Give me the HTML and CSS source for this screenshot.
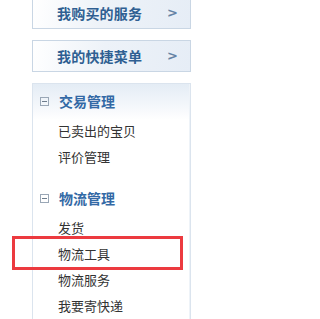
FILE: index.html
```html
<!DOCTYPE html>
<html lang="zh">
<head>
<meta charset="utf-8">
<link rel="stylesheet" href="styles.css">
</head>
<body>
<div class="sidebar">
  <a class="navbtn first"><span class="label">我购买的服务</span><span class="arrow">&gt;</span></a>
  <a class="navbtn"><span class="label">我的快捷菜单</span><span class="arrow">&gt;</span></a>
  <div class="panel">
    <div class="group">
      <div class="group-head"><span class="toggle"></span><span class="group-title">交易管理</span></div>
      <ul class="items">
        <li class="item">已卖出的宝贝</li>
        <li class="item">评价管理</li>
      </ul>
    </div>
    <div class="group">
      <div class="group-head"><span class="toggle"></span><span class="group-title">物流管理</span></div>
      <ul class="items">
        <li class="item">发货</li>
        <li class="item marked">物流工具<span class="highlight"></span></li>
        <li class="item">物流服务</li>
        <li class="item">我要寄快递</li>
      </ul>
    </div>
  </div>
</div>
</body>
</html>
```
FILE: styles.css
```css
html, body {
  margin: 0;
  padding: 0;
  background: #ffffff;
  overflow: hidden;
}
body {
  font-family: "Noto Sans CJK SC", "Noto Sans", sans-serif;
  width: 226px;
  height: 319px;
}
.sidebar {
  margin-left: 32px;
  width: 159px;
  margin-top: -3px;
  height: 322px;
  display: flex;
  flex-direction: column;
  gap: 11px;
}
.navbtn {
  box-sizing: border-box;
  flex: none;
  height: 32px;
  border: 1px solid #c9d6e4;
  background: linear-gradient(100deg, #ffffff 0%, #edf2f8 45%, #e6edf6 100%);
  display: flex;
  align-items: center;
  padding-left: 24px;
  padding-right: 12px;
  color: #2f5f92;
  font-weight: bold;
  font-size: 14px;
  line-height: 16px;
}
.navbtn .label {
  flex: 1;
  letter-spacing: 0.2px;
}
.navbtn .arrow {
  color: #6583a5;
  font-family: "DejaVu Sans", sans-serif;
  font-size: 13px;
  font-weight: bold;
}
.panel {
  box-sizing: border-box;
  flex: 1;
  min-height: 0;
  border: 1px solid #dbe4ee;
  border-bottom: none;
  box-shadow: inset -4px 0 0 -3px #eef3f8;
  background: linear-gradient(180deg, #e4ecf5 0px, #f4f7fb 22px, #ffffff 36px);
}
.group + .group {
  margin-top: 12px;
}
.group-head {
  height: 34px;
  display: flex;
  align-items: center;
  padding-left: 7px;
}
.toggle {
  box-sizing: border-box;
  width: 9px;
  height: 9px;
  border: 1px solid #9aa7b6;
  position: relative;
  margin-right: 10px;
}
.toggle::before {
  content: "";
  position: absolute;
  left: 1px;
  top: 3px;
  width: 5px;
  height: 1px;
  background: #6d7c8c;
}
.group-title {
  color: #3369a5;
  font-weight: bold;
  font-size: 14px;
}
.items {
  list-style: none;
  margin: 0;
  padding: 0 0 0 25px;
}
.item {
  height: 26px;
  line-height: 26px;
  font-size: 13px;
  color: #333333;
  position: relative;
}
.item:last-child {
  height: 25px;
}
.highlight {
  position: absolute;
  left: -46px;
  top: -5px;
  width: 171px;
  height: 34px;
  box-sizing: border-box;
  border: 3px solid #ec3a3f;
}
```
